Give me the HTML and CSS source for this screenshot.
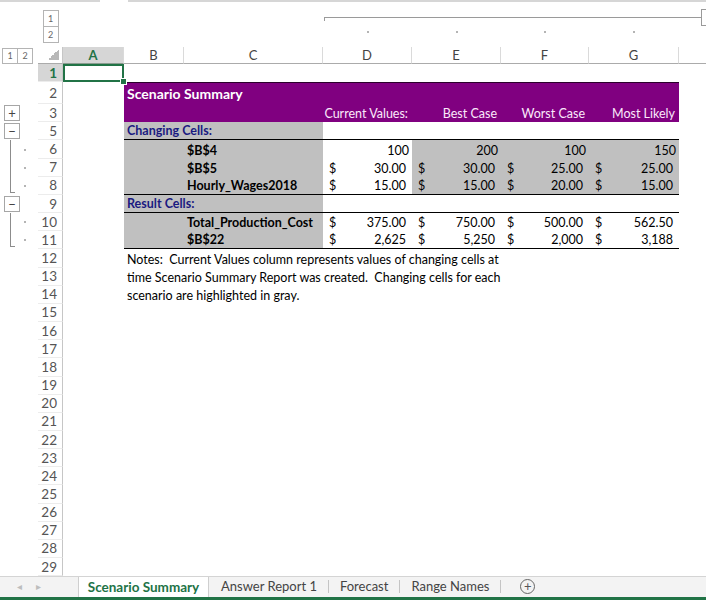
FILE: index.html
```html
<!DOCTYPE html>
<html>
<head>
	<meta charset="utf-8">
	<title>Scenario Summary</title>
	<link rel="stylesheet" href="styles.css">
</head>
<body>
	<div class="book">
		<div class="topbar"><div class="namebox"></div><div class="fx"></div></div>

		<div class="colout">
			<div class="lvl"><span class="obtn">1</span><span class="obtn">2</span></div>
			<div class="grp">
				<div class="grpline"><span class="gl"></span><span class="grpbtn"></span></div>
				<div class="grpdots"><i></i><i></i><i></i><i></i></div>
			</div>
		</div>

		<div class="sheet">
			<div class="row hdr">
				<div class="gut lvlrow"><span class="obtn">1</span><span class="obtn">2</span></div>
				<div class="corner"></div>
				<div class="ch sel">A</div>
				<div class="ch">B</div>
				<div class="ch">C</div>
				<div class="ch">D</div>
				<div class="ch">E</div>
				<div class="ch">F</div>
				<div class="ch">G</div>
				<div class="ch last"></div>
			</div>

			<div class="row">
				<div class="gut"></div><div class="rh sel">1</div>
				<div class="c cur"></div><div class="c"></div><div class="c"></div><div class="c"></div><div class="c"></div><div class="c"></div><div class="c"></div><div class="c"></div>
			</div>

			<div class="row r2">
				<div class="gut"></div><div class="rh">2</div>
				<div class="c"></div>
				<div class="c pu title">Scenario Summary</div>
				<div class="c"></div>
			</div>

			<div class="row">
				<div class="gut"><span class="ob">+</span></div><div class="rh">3</div>
				<div class="c"></div>
				<div class="c pu"></div><div class="c pu"></div>
				<div class="c pu hr">Current Values:</div>
				<div class="c pu hr">Best Case</div>
				<div class="c pu hr">Worst Case</div>
				<div class="c pu hr">Most Likely</div>
				<div class="c"></div>
			</div>

			<div class="row">
				<div class="gut"><span class="ob">&minus;</span></div><div class="rh">5</div>
				<div class="c"></div>
				<div class="c gr bb lbl span-bc">Changing Cells:</div>
				<div class="c bb"></div><div class="c bb"></div><div class="c bb"></div><div class="c bb"></div>
				<div class="c"></div>
			</div>

			<div class="row">
				<div class="gut"><span class="ln"></span><i class="dot"></i></div><div class="rh">6</div>
				<div class="c"></div><div class="c gr"></div>
				<div class="c gr b">$B$4</div>
				<div class="c n">100</div>
				<div class="c gr n">200</div>
				<div class="c gr n">100</div>
				<div class="c gr n">150</div>
				<div class="c"></div>
			</div>

			<div class="row">
				<div class="gut"><span class="ln"></span><i class="dot"></i></div><div class="rh">7</div>
				<div class="c"></div><div class="c gr"></div>
				<div class="c gr b">$B$5</div>
				<div class="c acc"><span>$</span><span>30.00</span></div>
				<div class="c gr acc"><span>$</span><span>30.00</span></div>
				<div class="c gr acc"><span>$</span><span>25.00</span></div>
				<div class="c gr acc"><span>$</span><span>25.00</span></div>
				<div class="c"></div>
			</div>

			<div class="row">
				<div class="gut"><span class="ln end"></span><i class="dot"></i></div><div class="rh">8</div>
				<div class="c"></div><div class="c gr bb"></div>
				<div class="c gr bb b">Hourly_Wages2018</div>
				<div class="c bb acc"><span>$</span><span>15.00</span></div>
				<div class="c gr bb acc"><span>$</span><span>15.00</span></div>
				<div class="c gr bb acc"><span>$</span><span>20.00</span></div>
				<div class="c gr bb acc"><span>$</span><span>15.00</span></div>
				<div class="c"></div>
			</div>

			<div class="row">
				<div class="gut"><span class="ob">&minus;</span></div><div class="rh">9</div>
				<div class="c"></div>
				<div class="c gr bb lbl span-bc">Result Cells:</div>
				<div class="c bb"></div><div class="c bb"></div><div class="c bb"></div><div class="c bb"></div>
				<div class="c"></div>
			</div>

			<div class="row">
				<div class="gut"><span class="ln"></span><i class="dot"></i></div><div class="rh">10</div>
				<div class="c"></div><div class="c gr"></div>
				<div class="c gr b">Total_Production_Cost</div>
				<div class="c acc"><span>$</span><span>375.00</span></div>
				<div class="c acc"><span>$</span><span>750.00</span></div>
				<div class="c acc"><span>$</span><span>500.00</span></div>
				<div class="c acc"><span>$</span><span>562.50</span></div>
				<div class="c"></div>
			</div>

			<div class="row">
				<div class="gut"><span class="ln end"></span><i class="dot"></i></div><div class="rh">11</div>
				<div class="c"></div><div class="c gr bb"></div>
				<div class="c gr bb b">$B$22</div>
				<div class="c bb acc"><span>$</span><span>2,625</span></div>
				<div class="c bb acc"><span>$</span><span>5,250</span></div>
				<div class="c bb acc"><span>$</span><span>2,000</span></div>
				<div class="c bb acc"><span>$</span><span>3,188</span></div>
				<div class="c"></div>
			</div>

			<div class="row">
				<div class="gut"></div><div class="rh">12</div>
				<div class="c"></div>
				<div class="c note">Notes:  Current Values column represents values of changing cells at</div>
			</div>
			<div class="row">
				<div class="gut"></div><div class="rh">13</div>
				<div class="c"></div>
				<div class="c note">time Scenario Summary Report was created.  Changing cells for each</div>
			</div>
			<div class="row">
				<div class="gut"></div><div class="rh">14</div>
				<div class="c"></div>
				<div class="c note">scenario are highlighted in gray.</div>
			</div>

			<div class="row"><div class="gut"></div><div class="rh">15</div></div>
			<div class="row"><div class="gut"></div><div class="rh">16</div></div>
			<div class="row"><div class="gut"></div><div class="rh">17</div></div>
			<div class="row"><div class="gut"></div><div class="rh">18</div></div>
			<div class="row"><div class="gut"></div><div class="rh">19</div></div>
			<div class="row"><div class="gut"></div><div class="rh">20</div></div>
			<div class="row"><div class="gut"></div><div class="rh">21</div></div>
			<div class="row"><div class="gut"></div><div class="rh">22</div></div>
			<div class="row"><div class="gut"></div><div class="rh">23</div></div>
			<div class="row"><div class="gut"></div><div class="rh">24</div></div>
			<div class="row"><div class="gut"></div><div class="rh">25</div></div>
			<div class="row"><div class="gut"></div><div class="rh">26</div></div>
			<div class="row"><div class="gut"></div><div class="rh">27</div></div>
			<div class="row"><div class="gut"></div><div class="rh">28</div></div>
			<div class="row"><div class="gut"></div><div class="rh">29</div></div>
		</div>

		<div class="tabs">
			<div class="nav"><span>&#9666;</span><span>&#9656;</span></div>
			<div class="tab active">Scenario Summary</div>
			<div class="tab">Answer Report 1</div>
			<span class="sep"></span>
			<div class="tab">Forecast</div>
			<span class="sep"></span>
			<div class="tab">Range Names</div>
			<span class="sep"></span>
			<div class="addsheet">+</div>
		</div>
	</div>
</body>
</html>
```

FILE: styles.css
```css
*{
	box-sizing: border-box;
}
html, body{
	margin: 0;
	padding: 0;
	background: #fff;
}
body{
	width: 706px;
	height: 600px;
	overflow: hidden;
	font-family: Lato, "Liberation Sans", sans-serif;
	font-size: 12.5px;
	color: #000;
	--cols: 38px 25px 61px 60px 139px 89px 89px 88px 90px 1fr;
}
.book{
	display: flex;
	flex-direction: column;
	height: 600px;
}

/* formula bar remains */
.topbar{
	display: flex;
	height: 4px;
	flex: none;
}
.topbar .namebox{
	width: 100px;
	border-top: 2px solid #d6d6d6;
}
.topbar .fx{
	flex: 1;
	margin-left: 28px;
	border-top: 2px solid #d6d6d6;
}

/* column outline */
.colout{
	display: grid;
	grid-template-columns: var(--cols);
	height: 43px;
	flex: none;
}
.colout .lvl{
	grid-column: 2;
	display: flex;
	flex-direction: column;
	align-items: center;
	padding-top: 6px;
}
.obtn{
	display: flex;
	align-items: center;
	justify-content: center;
	width: 16px;
	height: 17px;
	border: 1px solid #b4b4b4;
	font-size: 9px;
	color: #666;
	background: #fff;
}
.colout .lvl .obtn + .obtn{
	margin-top: -1px;
}
.grp{
	grid-column: 6 / 11;
	min-width: 0;
}
.grpline{
	display: flex;
	align-items: flex-start;
}
.gl{
	flex: none;
	width: 377px;
	height: 4px;
	margin-top: 13px;
	margin-left: 1px;
	border-top: 1px solid #9a9a9a;
	border-left: 1px solid #9a9a9a;
}
.grpbtn{
	flex: none;
	width: 16px;
	height: 17px;
	margin-top: 5px;
	border: 1px solid #9a9a9a;
}
.grpdots{
	display: grid;
	grid-template-columns: 89px 89px 88px 90px;
	margin-top: 5px;
}
.grpdots i{
	justify-self: center;
	width: 2px;
	height: 2px;
	background: #b4b4b4;
}

/* sheet grid */
.sheet{
	flex: none;
}
.row{
	display: grid;
	grid-template-columns: var(--cols);
	height: 18.16px;
}
.row.hdr{
	height: 17px;
}
.row.r2{
	height: 22px;
}
.gut{
	display: flex;
	align-items: center;
	min-width: 0;
}
.gut.lvlrow{
	padding-left: 2px;
}
.gut.lvlrow .obtn{
	height: 16px;
}
.gut.lvlrow .obtn + .obtn{
	margin-left: -1px;
}
.ob{
	display: flex;
	align-items: center;
	justify-content: center;
	width: 16px;
	height: 16px;
	margin-left: 4px;
	border: 1px solid #a6a6a6;
	font-size: 13px;
	line-height: 1;
	color: #444;
}
.ln{
	align-self: stretch;
	width: 5px;
	margin-left: 10px;
	border-left: 1px solid #8c8c8c;
}
.ln.end{
	border-bottom: 1px solid #8c8c8c;
	margin-bottom: 2px;
}
.dot{
	width: 2px;
	height: 2px;
	margin-left: 9px;
	background: #b4b4b4;
}
.corner{
	border-right: 1px solid #c6c6c6;
	border-bottom: 1px solid #ababab;
	background: linear-gradient(135deg, transparent 50%, #b8b8b8 50%) no-repeat right 3px bottom 3px / 11px 11px;
}
.ch{
	display: flex;
	align-items: center;
	justify-content: center;
	border-right: 1px solid #dadada;
	border-bottom: 1px solid #ababab;
	color: #444;
	font-size: 13px;
}
.ch.last{
	border-right: none;
}
.ch.sel{
	background: #d6d6d6;
	color: #217346;
	font-weight: bold;
	border-bottom: 1px solid #8a9c90;
}
.rh{
	display: flex;
	align-items: center;
	justify-content: flex-end;
	padding-right: 5px;
	border-right: 1px solid #c6c6c6;
	border-bottom: 1px solid #ececec;
	color: #555;
	font-size: 13.5px;
}
.rh.sel{
	background: #d6d6d6;
	color: #217346;
	font-weight: bold;
}

/* cells */
.c{
	display: flex;
	align-items: flex-end;
	min-width: 0;
	padding: 0 3px;
	line-height: 16px;
	white-space: pre;
}
.c.cur{
	position: relative;
	box-shadow: inset 0 0 0 2px #217346;
}
.c.cur::after{
	content: "";
	position: absolute;
	right: -3px;
	bottom: -3px;
	width: 5px;
	height: 5px;
	background: #217346;
	border: 1px solid #fff;
	z-index: 2;
}
.pu{
	background: #800080;
	color: #fbe9fb;
}
.r2 .pu{
	border-top: 1px solid #2b002b;
}
.title{
	grid-column: 4 / 10;
	font-size: 14px;
	font-weight: bold;
	color: #fff;
	padding-bottom: 2px;
}
.hr{
	justify-content: flex-end;
	padding-right: 4px;
}
.gr{
	background: #c0c0c0;
}
.bb{
	border-bottom: 1px solid #000;
}
.span-bc{
	grid-column: 4 / 6;
}
.lbl{
	font-weight: bold;
	color: #1a1a80;
}
.b{
	font-weight: bold;
}
.n{
	justify-content: flex-end;
	padding-right: 3px;
}
.acc{
	justify-content: space-between;
	padding: 0 6px;
}
.note{
	grid-column: 4 / 11;
}

/* sheet tabs */
.tabs{
	display: flex;
	align-items: stretch;
	margin-top: auto;
	height: 24px;
	flex: none;
	background: #f3f3f3;
	border-top: 1px solid #d4d4d4;
	border-bottom: 3px solid #217346;
	font-size: 13px;
	color: #444;
	white-space: nowrap;
	padding-bottom: 2px;
}
.nav{
	display: flex;
	align-items: center;
	width: 78px;
	padding-left: 17px;
	gap: 14px;
	color: #bdbdbd;
	font-size: 10px;
}
.tab{
	display: flex;
	align-items: center;
	padding: 0 11px;
}
.tab.active{
	width: 131px;
	padding: 0;
	justify-content: center;
	background: #fff;
	color: #217346;
	font-weight: bold;
	font-size: 13.5px;
	border-left: 1px solid #cfcfcf;
	border-right: 1px solid #cfcfcf;
	margin-right: 1px;
	margin-bottom: -2px;
}
.sep{
	align-self: center;
	width: 1px;
	height: 13px;
	background: #c4c4c4;
}
.addsheet{
	display: flex;
	align-items: center;
	justify-content: center;
	align-self: center;
	width: 15px;
	height: 15px;
	margin-left: 19px;
	border: 1px solid #666;
	border-radius: 50%;
	font-size: 13px;
	line-height: 1;
	color: #555;
}
```
